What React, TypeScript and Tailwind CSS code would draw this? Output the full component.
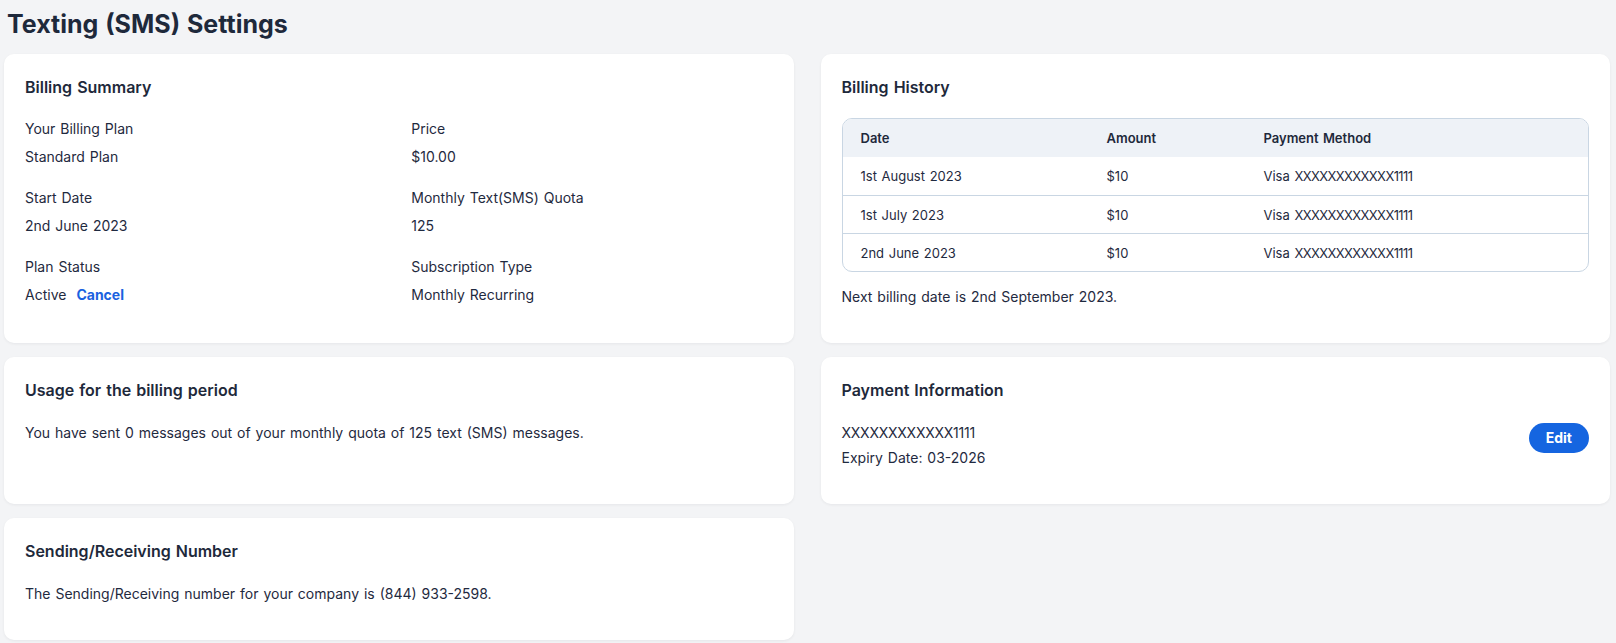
const history = [
  { date: "1st August 2023", amount: "$10", card: "XXXXXXXXXXXX1111" },
  { date: "1st July 2023", amount: "$10", card: "XXXXXXXXXXXX1111" },
  { date: "2nd June 2023", amount: "$10", card: "XXXXXXXXXXXX1111" },
];

function Card({ title, children }: { title: string; children: React.ReactNode }) {
  return (
    <section className="bg-white rounded-[10px] shadow-[0_1px_3px_rgba(15,23,42,0.06)] px-[21px] pt-[21px] pb-9">
      <h3 className="text-base leading-6 font-semibold text-[#1e293b]">{title}</h3>
      {children}
    </section>
  );
}

function Field({ label, children }: { label: string; children: React.ReactNode }) {
  return (
    <div className="flex flex-col gap-2">
      <div>{label}</div>
      <div>{children}</div>
    </div>
  );
}

export default function App() {
  return (
    <div className="h-screen overflow-hidden bg-[#f3f4f6] pl-1 pr-[6px] pt-2 font-['Inter',sans-serif] text-[#1f2a40] text-sm leading-5 [word-spacing:1px]">
      <h1 className="pl-[3px] text-[25px] leading-8 font-bold text-[#1e293b] mb-[14px]">Texting (SMS) Settings</h1>
      <div className="grid grid-cols-2 gap-x-[27px] gap-y-[14px]">
        <Card title="Billing Summary">
          <div className="mt-5 grid grid-cols-2 gap-x-[25px] gap-y-[21px]">
            <Field label="Your Billing Plan">Standard Plan</Field>
            <Field label="Price">$10.00</Field>
            <Field label="Start Date">2nd June 2023</Field>
            <Field label="Monthly Text(SMS) Quota">125</Field>
            <Field label="Plan Status">
              Active
              <a href="#" className="ml-[10px] font-bold text-[#1a62e0]">Cancel</a>
            </Field>
            <Field label="Subscription Type">Monthly Recurring</Field>
          </div>
        </Card>

        <Card title="Billing History">
          <div className="mt-[19px] border border-[#c9d6e3] rounded-[10px] overflow-hidden text-[13px]">
            <div className="grid grid-cols-[246px_157px_1fr] bg-[#eef2f7] h-[38px] items-center pl-[18px] font-semibold text-[#1e293b]">
              <div>Date</div>
              <div>Amount</div>
              <div>Payment Method</div>
            </div>
            {history.map((row, i) => (
              <div
                key={row.date}
                className={
                  i === 0
                    ? "grid grid-cols-[246px_157px_1fr] h-[38px] items-center pl-[18px]"
                    : "grid grid-cols-[246px_157px_1fr] h-[38px] items-center pl-[18px] border-t border-[#c9d6e3]"
                }
              >
                <div>{row.date}</div>
                <div>{row.amount}</div>
                <div>
                  Visa <span className="tracking-[-0.6px]">{row.card}</span>
                </div>
              </div>
            ))}
          </div>
          <p className="mt-[15px]">Next billing date is 2nd September 2023.</p>
        </Card>

        <Card title="Usage for the billing period">
          <p className="mt-[21px]">You have sent 0 messages out of your monthly quota of 125 text (SMS) messages.</p>
        </Card>

        <Card title="Payment Information">
          <div className="mt-[21px] flex items-start justify-between">
            <div className="flex flex-col gap-[5px]">
              <div className="tracking-[-0.25px]">XXXXXXXXXXXX1111</div>
              <div>Expiry Date: 03-2026</div>
            </div>
            <button className="h-[30px] px-[17px] rounded-full bg-[#1565e0] text-white font-bold text-sm">Edit</button>
          </div>
        </Card>

        <Card title="Sending/Receiving Number">
          <p className="mt-[21px]">The Sending/Receiving number for your company is (844) 933-2598.</p>
        </Card>
      </div>
    </div>
  );
}
